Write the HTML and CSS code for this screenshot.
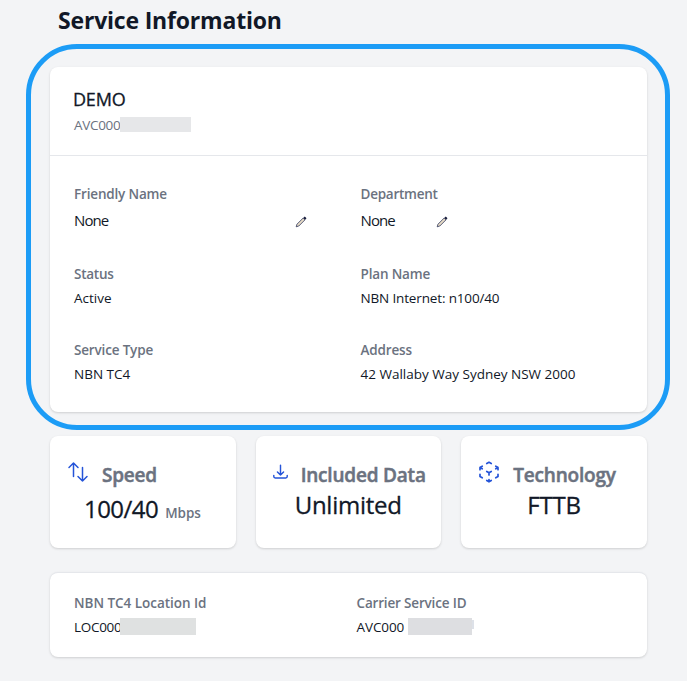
FILE: index.html
```
<!DOCTYPE html>
<html lang="en">
<head>
<meta charset="utf-8">
<title>Service Information</title>
<link rel="stylesheet" href="styles.css">
</head>
<body>
<main class="page">
  <h1 class="title">Service Information</h1>
  <div class="focus">
    <section class="card details">
      <header class="details-head">
        <h2 class="name">DEMO</h2>
        <p class="sub"><span class="partial">AVC000</span><i class="mask mask-a"></i></p>
      </header>
      <dl class="fields">
        <div><dt>Friendly Name</dt>
          <dd class="editable wide"><span>None</span>
            <svg class="pen" viewBox="0 0 12 12"><path d="M1.2 10.8l.8-2.6 6.2-6.2 1.8 1.8-6.2 6.2z"/><path class="tip" d="M9 1.2l1.8 1.8"/></svg></dd></div>
        <div><dt class="tight">Department</dt>
          <dd class="editable"><span>None</span>
            <svg class="pen" viewBox="0 0 12 12"><path d="M1.2 10.8l.8-2.6 6.2-6.2 1.8 1.8-6.2 6.2z"/><path class="tip" d="M9 1.2l1.8 1.8"/></svg></dd></div>
        <div><dt class="tight">Status</dt><dd>Active</dd></div>
        <div><dt>Plan Name</dt><dd class="plan">NBN Internet: n100/40</dd></div>
        <div><dt>Service Type</dt><dd>NBN TC4</dd></div>
        <div><dt>Address</dt><dd>42 Wallaby Way Sydney NSW 2000</dd></div>
      </dl>
    </section>
    <div class="ring"></div>
  </div>
  <section class="stats">
    <article class="card stat speed">
      <div class="stat-head">
        <svg class="icon" viewBox="0 0 24 24"><path d="M3 7.500L7.500 3m0 0L12 7.500M7.500 3v13.500m13.500 0L16.500 21m0 0L12 16.500m4.500 4.500V7.500"/></svg>
        <h3>Speed</h3>
      </div>
      <p class="value"><span>100/40</span><small>Mbps</small></p>
    </article>
    <article class="card stat data">
      <div class="stat-head">
        <svg class="icon" viewBox="0 0 24 24"><path d="M12 5v10.200M8.800 12l3.200 3.200 3.200-3.200M5 15.500v1.300q0 1.500 1.500 1.500h11q1.500 0 1.500-1.500v-1.300"/></svg>
        <h3>Included Data</h3>
      </div>
      <p class="value">Unlimited</p>
    </article>
    <article class="card stat tech">
      <div class="stat-head">
        <svg class="icon bold" viewBox="0 0 24 24"><path d="M21 7.5l-2.25-1.313M21 7.5v2.25m0-2.25l-2.25 1.313M3 7.5l2.25-1.313M3 7.5l2.25 1.313M3 7.5v2.25m9 3l2.25-1.313M12 12.75l-2.25-1.313M12 12.75V15m0 6.75l2.25-1.313M12 21.75V19.5m0 2.25l-2.25-1.313m0-16.875L12 2.25l2.25 1.313M21 14.25v2.25l-2.25 1.313m-13.5 0L3 16.5v-2.25"/></svg>
        <h3>Technology</h3>
      </div>
      <p class="value">FTTB</p>
    </article>
  </section>
  <dl class="card ids">
    <div><dt class="loc">NBN TC4 Location Id</dt><dd><span class="partial">LOC000</span><i class="mask mask-b"></i></dd></div>
    <div><dt>Carrier Service ID</dt><dd><span class="partial full">AVC000</span><i class="mask mask-c"></i><i class="mask fringe"></i></dd></div>
  </dl>
</main>
</body>
</html>
```
FILE: styles.css
```
* { box-sizing: border-box; margin: 0; padding: 0; }
body {
  background: #f3f4f6;
  color: #111827;
  font-family: "Open Sans", "Noto Sans", sans-serif;
  font-size: 13.5px;
  line-height: 20px;
  white-space: nowrap;
  overflow: hidden;
}
.page { padding: 5px 40px 24px 50px; }
.title { padding-left: 8px; height: 62px; font-size: 23px; font-weight: 700; line-height: 31px; letter-spacing: -.19px; }
.card { background: #fff; border-radius: 8px; box-shadow: 0 1px 3px rgba(0,0,0,.1), 0 1px 2px rgba(0,0,0,.06); }
.focus { position: relative; }
.ring { position: absolute; inset: -23px -23px -18px -24px; border: 5px solid #1c9cf6; border-radius: 51px; }
.details { height: 345px; }
.details-head { height: 89px; padding: 20px 23px; border-bottom: 1px solid #e5e7eb; }
.name { font-size: 18px; line-height: 24px; font-weight: 500; letter-spacing: -.2px; -webkit-text-stroke: .3px; }
.sub { display: flex; align-items: center; margin: 4px 0 0 1px; height: 19px; color: #6b7280; }
.fields { display: grid; grid-template-columns: 1fr 1fr; gap: 32px 24px; padding: 28px 24px; }
dt { color: #6b7280; font-weight: 600; letter-spacing: -.17px; }
dt.tight { letter-spacing: -.25px; }
dt.loc { letter-spacing: -.03px; }
dd { margin-top: 4px; height: 20px; display: flex; align-items: center; }
dd.plan { letter-spacing: -.15px; }
dd.editable { height: 24px; font-size: 15px; width: 87px; justify-content: space-between; letter-spacing: -.9px; }
dd.wide { width: 233px; }
.pen { width: 12px; height: 12px; margin-top: 4px; fill: #e8dcc6; stroke: #2c3458; stroke-width: .8; }
.pen .tip { stroke: #171c3c; stroke-width: 2; }
.mask { flex: none; }
.mask-a { width: 71px; height: 15px; background: #e6e7e9; }
.mask-b { width: 76px; height: 17px; background: #dfe1e1; }
.mask-c { width: 64px; height: 17px; margin-left: 3px; background: #dddee1; }
.fringe { width: 2px; height: 9px; margin-bottom: 4px; background: #dde1e8; }
.partial { width: 46px; letter-spacing: -.3px; }
.partial.full { width: 48px; letter-spacing: -.1px; }
.stats { display: grid; grid-template-columns: repeat(3, 1fr); gap: 20px; margin-top: 24px; }
.stat { height: 112px; padding-top: 24px; }
.stat-head { display: flex; }
.stat h3 { font-size: 19px; line-height: 30px; font-weight: 600; letter-spacing: -.2px; color: #6b7280; -webkit-text-stroke: .5px; }
.icon { width: 24px; height: 24px; flex: none; fill: none; stroke: #2554d8; stroke-width: 1.5; stroke-linecap: round; stroke-linejoin: round; }
.icon.bold { stroke-width: 1.7; }
.value { font-size: 24px; line-height: 30px; font-weight: 500; letter-spacing: -.25px; -webkit-text-stroke: .3px; }
.value small { margin-left: 7px; font-size: 13.5px; font-weight: 600; letter-spacing: 0; color: #6b7280; -webkit-text-stroke: 0; }
.speed .stat-head { padding-left: 16px; gap: 12px; }
.speed .value { padding: 4px 0 0 34px; letter-spacing: -.55px; }
.data .stat-head { padding-left: 13px; gap: 8px; }
.data .icon { padding-right: 1px; }
.data .value { padding-left: 39px; }
.tech .stat-head { padding-left: 16px; gap: 12px; }
.tech .value { padding-left: 66px; }
.ids { display: grid; grid-template-columns: 1fr 1fr; column-gap: 16px; height: 85px; margin-top: 24px; padding: 20px 24px; border-top: 1px solid #e5e7eb; }
.ids dd { height: 19px; }
```
